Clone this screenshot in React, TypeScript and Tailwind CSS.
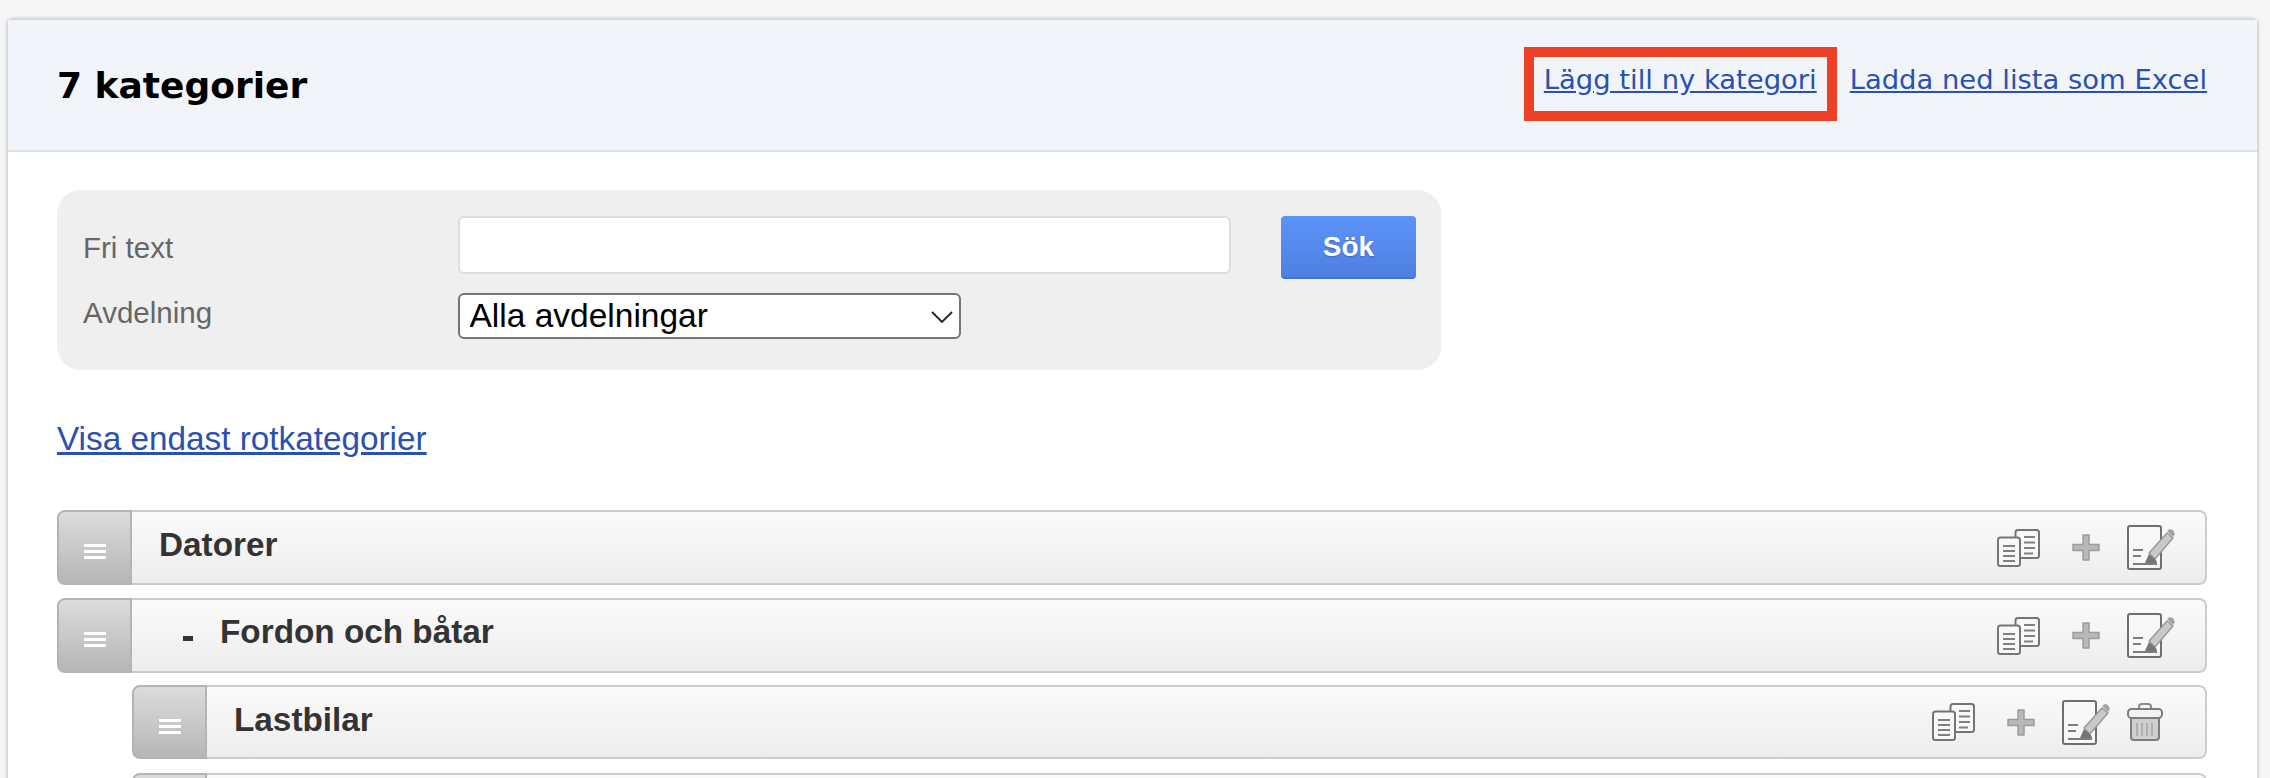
import React from "react";

const CopyIcon = () => (
  <svg width="43" height="38" viewBox="0 0 43 38" fill="none" className="shrink-0 blur-[0.5px]">
    <rect x="18.500" y="1" width="23.500" height="28" rx="2.500" fill="#f8f8f8" stroke="#757575" strokeWidth="2" />
    <path d="M27 8h11M27 13.500h11M27 19h11M27 24.500h9" stroke="#808080" strokeWidth="2.200" />
    <rect x="1" y="8.500" width="22" height="28.500" rx="2.500" fill="#f8f8f8" stroke="#757575" strokeWidth="2" />
    <path d="M6 17h12M6 22h12M6 27h12M6 32h12" stroke="#808080" strokeWidth="2.200" />
  </svg>
);

const PlusIcon = () => (
  <svg width="28" height="27" viewBox="0 0 28 27" fill="none" className="shrink-0 blur-[0.5px]">
    <path d="M11 1h6v9.500h10v6H17V26h-6v-9.500H1v-6h10z" fill="#b8b8b8" stroke="#9c9c9c" strokeWidth="1.500" strokeLinejoin="round" />
  </svg>
);

const EditIcon = () => (
  <svg width="48" height="45" viewBox="0 0 48 45" fill="none" className="shrink-0 blur-[0.5px]">
    <rect x="1" y="1" width="33" height="43" rx="2" fill="#f8f8f8" stroke="#6f6f6f" strokeWidth="2" />
    <path d="M6 25h10M6 31h8M6 39h24" stroke="#7d7d7d" strokeWidth="2" />
    <path d="M22 28L40 8l6 5-18 21z" fill="#c9c9c9" stroke="#969696" strokeWidth="1.300" strokeLinejoin="round" />
    <path d="M40 6l3-2 3 1 2 4-2 3z" fill="#a3a3a3" />
    <path d="M18 38l4-9 7 6 1 3z" fill="#757575" />
  </svg>
);

const TrashIcon = () => (
  <svg width="36" height="38" viewBox="0 0 36 38" fill="none" className="shrink-0 blur-[0.5px]">
    <path d="M12 6V3.500Q12 1 15 1h6q3 0 3 2.500V6" stroke="#8a8a8a" strokeWidth="2" />
    <rect x="1" y="6" width="34" height="9" rx="3.500" fill="#f2f2f2" stroke="#7d7d7d" strokeWidth="2" />
    <path d="M4 15h28v19q0 3-3 3H7q-3 0-3-3z" fill="#cfcfcf" stroke="#7d7d7d" strokeWidth="2" />
    <path d="M10 20v13M15 20v13M20 20v13M25 20v13" stroke="#b0b0b0" strokeWidth="2" />
  </svg>
);

const Handle = () => (
  <div className="flex h-full w-[75px] shrink-0 flex-col items-center justify-center gap-[3px] rounded-l-lg border-2 border-[#b4b4b4] bg-gradient-to-b from-[#dcdcdc] to-[#b6b6b6] pt-[8px]">
    <span className="h-[3px] w-[22px] bg-white" />
    <span className="h-[3px] w-[22px] bg-white" />
    <span className="h-[3px] w-[22px] bg-white" />
  </div>
);

type RowProps = {
  title?: string;
  dash?: boolean;
  child?: boolean;
  trash?: boolean;
  className: string;
};

const Row = ({ title, dash, child, trash, className }: RowProps) => (
  <div className={`flex shrink-0 items-stretch ${child ? "ml-[75px]" : ""} ${className}`}>
    <Handle />
    <div className="flex min-w-0 flex-1 items-center rounded-r-lg border-2 border-l-0 border-[#cccccc] bg-gradient-to-b from-[#fbfbfb] to-[#ededed]">
      <div className={`flex flex-1 items-center font-['Liberation_Sans',Arial,sans-serif] text-[33.300px] font-bold text-[#333333] ${dash ? "pb-[7px] pl-[51px]" : "pb-[5px] pl-[27px]"}`}>
        {dash && <span className="mr-[27px] h-[5px] w-[10px] translate-y-[6px] bg-[#333333]" />}
        {title}
      </div>
      {title && (
        <div className={`flex items-center ${trash ? "pr-[42px]" : "pr-[30px]"}`}>
          <CopyIcon />
          <span className="ml-[32px]"><PlusIcon /></span>
          <span className="ml-[27px]"><EditIcon /></span>
          {trash && <span className="ml-[17px]"><TrashIcon /></span>}
        </div>
      )}
    </div>
  </div>
);

export default function App() {
  return (
    <div className="h-[778px] overflow-hidden bg-[#f6f6f6] pl-[6px] pr-[11px] pt-[18px] font-['Liberation_Sans',Arial,sans-serif]">
      <div className="h-[800px] rounded-t-lg border-x-2 border-t-2 border-[#d9d9d9] bg-white shadow-[0_-1px_3px_rgba(0,0,0,0.1)]">
        <header className="flex h-[132px] items-center justify-between border-b-2 border-[#dde1ea] bg-[#f1f4f9] pl-[49px] pr-[50px]">
          <h1 className="pt-[2px] font-['DejaVu_Sans',Verdana,sans-serif] text-[36px] font-bold text-black">7 kategorier</h1>
          <div className="flex -translate-y-[1px] items-center font-['DejaVu_Sans',Verdana,sans-serif] text-[27.400px] text-[#2a50b2]">
            <div className="border-[10px] border-[#ee4027] px-[10px] pb-[11px] pt-[3px] leading-[40px]">
              <a href="#" className="underline">Lägg till ny kategori</a>
            </div>
            <a href="#" className="ml-[13px] -translate-y-[4px] underline">Ladda ned lista som Excel</a>
          </div>
        </header>
        <main className="px-[49px] pt-[38px]">
          <form className="h-[180px] w-[1384px] rounded-[24px] bg-[#efefef] pl-[26px] pr-[25px] pt-[26px]">
            <div className="flex items-start">
              <label className="w-[374.500px] shrink-0 pt-[15px] text-[29.500px] leading-[34px] text-[#666666]">Fri text</label>
              <input className="h-[58px] w-[773.500px] shrink-0 rounded-md border-2 border-[#dddddd] bg-white" />
              <button type="button" className="ml-[50px] h-[63px] w-[135px] shrink-0 rounded-[4px] border-b-2 border-[#4673cf] bg-gradient-to-b from-[#5c93f8] to-[#4f80e2] text-[28px] font-bold text-white [text-shadow:0_1px_2px_rgba(0,0,0,0.25)]">Sök</button>
            </div>
            <div className="mt-[14px] flex items-start">
              <label className="w-[374.500px] shrink-0 pt-[3px] text-[29.500px] leading-[34px] text-[#666666]">Avdelning</label>
              <div className="relative h-[46px] w-[503.500px]">
                <select className="h-full w-full appearance-none rounded-md border-2 border-[#767676] bg-white pl-[10px] text-[33.500px] leading-[38px] text-black">
                  <option>Alla avdelningar</option>
                </select>
                <svg width="22" height="12" viewBox="0 0 22 12" fill="none" className="pointer-events-none absolute right-[8px] top-[18px]">
                  <path d="M1 1l10 10L21 1" stroke="#222222" strokeWidth="1.800" />
                </svg>
              </div>
            </div>
          </form>
          <a href="#" className="mt-[50px] block w-fit text-[33.300px] leading-[38px] text-[#2a50b2] underline">Visa endast rotkategorier</a>
          <div className="mt-[52px] flex w-[2150px] flex-col">
            <Row title="Datorer" className="h-[75px]" />
            <Row title="Fordon och båtar" dash className="mt-[13px] h-[75px]" />
            <Row title="Lastbilar" child trash className="mt-[12px] h-[74px]" />
            <Row child className="mt-[14px] h-[74px]" />
          </div>
        </main>
      </div>
    </div>
  );
}
